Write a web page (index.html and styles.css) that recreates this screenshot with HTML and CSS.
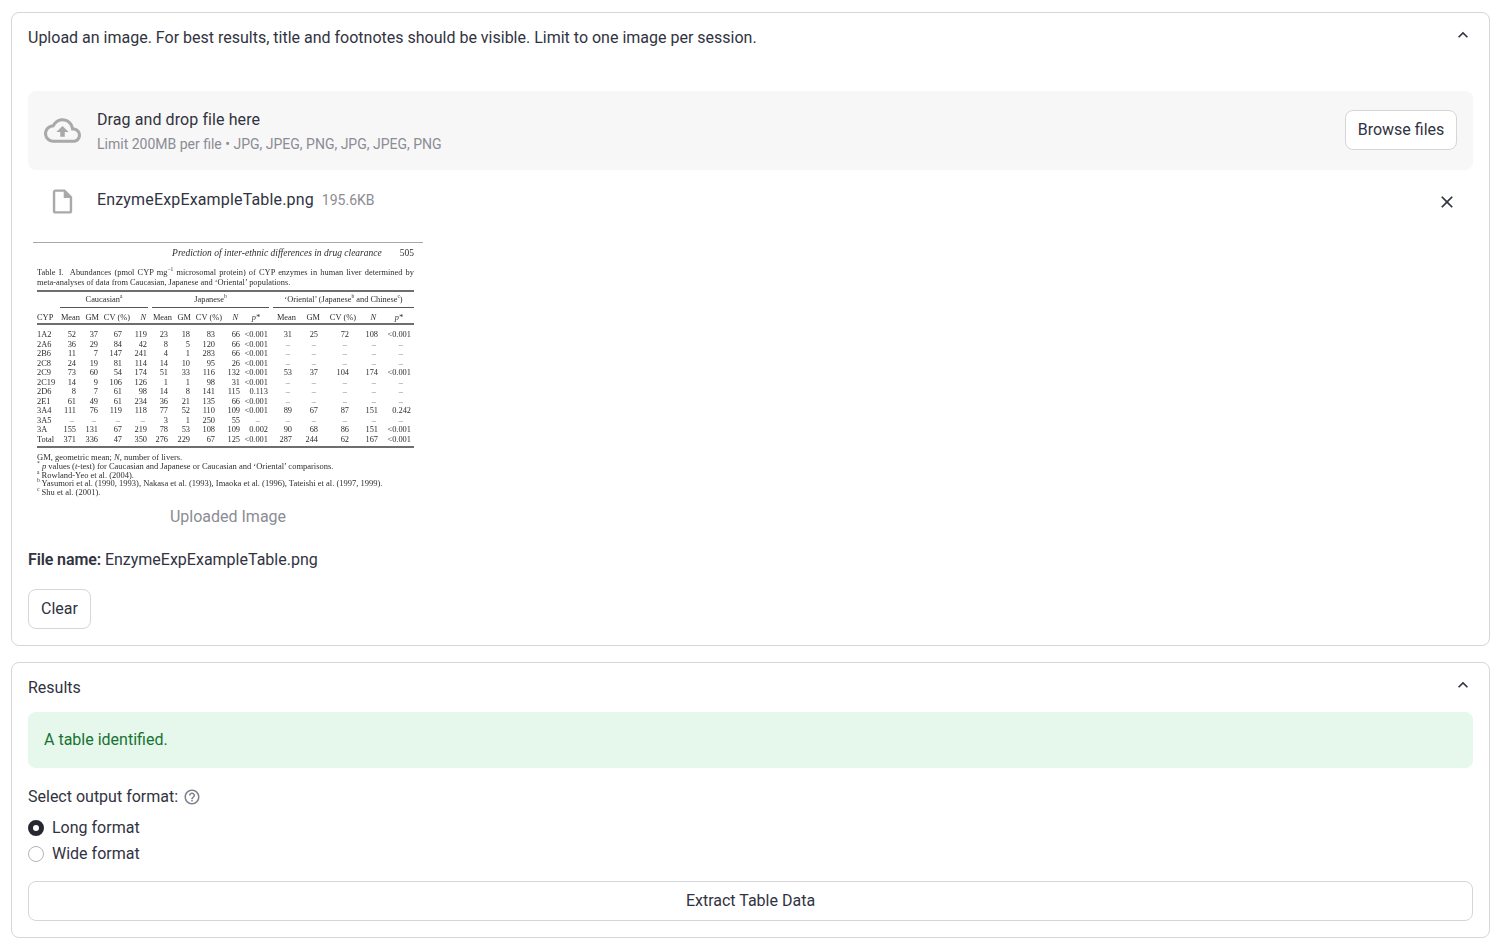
FILE: index.html
```html
<!DOCTYPE html>
<html lang="en">
<head>
<meta charset="utf-8">
<title>Upload an image</title>
<link rel="stylesheet" href="styles.css">
</head>
<body>
<main class="page">
  <section class="card">
    <div class="card-head">
      <span>Upload an image. For best results, title and footnotes should be visible. Limit to one image per session.</span>
      <svg class="chev" viewBox="0 0 24 24"><path d="M12 8l-6 6 1.41 1.41L12 10.83l4.59 4.58L18 14z"/></svg>
    </div>
    <div class="card-body">
      <div class="dropzone">
        <svg class="cloud" viewBox="0 0 24 24"><path d="M19.35 10.04C18.67 6.59 15.64 4 12 4 9.11 4 6.6 5.64 5.35 8.04 2.34 8.36 0 10.91 0 14c0 3.31 2.69 6 6 6h13c2.76 0 5-2.24 5-5 0-2.64-2.05-4.78-4.65-4.96zM19 18H6c-2.21 0-4-1.79-4-4 0-2.05 1.53-3.76 3.56-3.97l1.07-.11.5-.95C8.08 7.14 9.94 6 12 6c2.62 0 4.88 1.86 5.39 4.43l.3 1.5 1.53.11c1.56.1 2.78 1.41 2.78 2.96 0 1.65-1.35 3-3 3zM8 13h2.55v3h2.9v-3H16l-4-4z"/></svg>
        <div class="drop-text">
          <div class="drop-title">Drag and drop file here</div>
          <div class="drop-note">Limit 200MB per file • JPG, JPEG, PNG, JPG, JPEG, PNG</div>
        </div>
        <button class="btn browse">Browse files</button>
      </div>

      <div class="file-row">
        <div class="file-icon"><svg viewBox="0 0 24 24"><path d="M14 2H6c-1.1 0-1.99.9-1.99 2L4 20c0 1.1.89 2 1.99 2H18c1.1 0 2-.9 2-2V8l-6-6zM6 20V4h7v5h5v11H6z"/></svg></div>
        <span class="file-name">EnzymeExpExampleTable.png</span>
        <span class="file-size">195.6KB</span>
        <svg class="close" viewBox="0 0 24 24"><path d="M19 6.41L17.59 5 12 10.59 6.41 5 5 6.41 10.59 12 5 17.59 6.41 19 12 13.41 17.59 19 19 17.59 13.41 12z"/></svg>
      </div>

      <figure class="figure">
        <div class="scan">
          <div class="top-rule"></div>
          <div class="inner">
            <div class="running"><i>Prediction of inter-ethnic differences in drug clearance</i><span>505</span></div>
            <div class="caption-first">Table I. &nbsp;Abundances (pmol CYP mg<sup>−1</sup> microsomal protein) of CYP enzymes in human liver determined by</div>
            <div class="caption-second">meta-analyses of data from Caucasian, Japanese and ‘Oriental’ populations.</div>
            <div class="thick r1"></div>
            <div class="groups">
              <div class="group"><span>Caucasian<sup>a</sup></span></div>
              <div class="group"><span>Japanese<sup>b</sup></span></div>
              <div class="group"><span>‘Oriental’ (Japanese<sup>b</sup> and Chinese<sup>c</sup>)</span></div>
            </div>
            <div class="heads">
              <span class="l">CYP</span><span>Mean</span><span>GM</span><span>CV (%)</span><i>N</i><span>Mean</span><span>GM</span><span>CV (%)</span><i>N</i><i>p*</i><span>Mean</span><span>GM</span><span>CV (%)</span><i>N</i><i>p*</i>
            </div>
            <div class="thick r2"></div>
            <div class="rows">
              <div class="row"><span class="l">1A2</span><span>52</span><span>37</span><span>67</span><span>119</span><span>23</span><span>18</span><span>83</span><span>66</span><span>&lt;0.001</span><span>31</span><span>25</span><span>72</span><span>108</span><span>&lt;0.001</span></div>
              <div class="row"><span class="l">2A6</span><span>36</span><span>29</span><span>84</span><span>42</span><span>8</span><span>5</span><span>120</span><span>66</span><span>&lt;0.001</span><span class="d">–</span><span class="d">–</span><span class="d">–</span><span class="d">–</span><span class="dl">–</span></div>
              <div class="row"><span class="l">2B6</span><span>11</span><span>7</span><span>147</span><span>241</span><span>4</span><span>1</span><span>283</span><span>66</span><span>&lt;0.001</span><span class="d">–</span><span class="d">–</span><span class="d">–</span><span class="d">–</span><span class="dl">–</span></div>
              <div class="row"><span class="l">2C8</span><span>24</span><span>19</span><span>81</span><span>114</span><span>14</span><span>10</span><span>95</span><span>26</span><span>&lt;0.001</span><span class="d">–</span><span class="d">–</span><span class="d">–</span><span class="d">–</span><span class="dl">–</span></div>
              <div class="row"><span class="l">2C9</span><span>73</span><span>60</span><span>54</span><span>174</span><span>51</span><span>33</span><span>116</span><span>132</span><span>&lt;0.001</span><span>53</span><span>37</span><span>104</span><span>174</span><span>&lt;0.001</span></div>
              <div class="row"><span class="l">2C19</span><span>14</span><span>9</span><span>106</span><span>126</span><span>1</span><span>1</span><span>98</span><span>31</span><span>&lt;0.001</span><span class="d">–</span><span class="d">–</span><span class="d">–</span><span class="d">–</span><span class="dl">–</span></div>
              <div class="row"><span class="l">2D6</span><span>8</span><span>7</span><span>61</span><span>98</span><span>14</span><span>8</span><span>141</span><span>115</span><span>0.113</span><span class="d">–</span><span class="d">–</span><span class="d">–</span><span class="d">–</span><span class="dl">–</span></div>
              <div class="row"><span class="l">2E1</span><span>61</span><span>49</span><span>61</span><span>234</span><span>36</span><span>21</span><span>135</span><span>66</span><span>&lt;0.001</span><span class="d">–</span><span class="d">–</span><span class="d">–</span><span class="d">–</span><span class="dl">–</span></div>
              <div class="row"><span class="l">3A4</span><span>111</span><span>76</span><span>119</span><span>118</span><span>77</span><span>52</span><span>110</span><span>109</span><span>&lt;0.001</span><span>89</span><span>67</span><span>87</span><span>151</span><span>0.242</span></div>
              <div class="row"><span class="l">3A5</span><span class="d">–</span><span class="d">–</span><span class="d">–</span><span class="d">–</span><span>3</span><span>1</span><span>250</span><span>55</span><span class="dl">–</span><span class="d">–</span><span class="d">–</span><span class="d">–</span><span class="d">–</span><span class="dl">–</span></div>
              <div class="row"><span class="l">3A</span><span>155</span><span>131</span><span>67</span><span>219</span><span>78</span><span>53</span><span>108</span><span>109</span><span>0.002</span><span>90</span><span>68</span><span>86</span><span>151</span><span>&lt;0.001</span></div>
              <div class="row"><span class="l">Total</span><span>371</span><span>336</span><span>47</span><span>350</span><span>276</span><span>229</span><span>67</span><span>125</span><span>&lt;0.001</span><span>287</span><span>244</span><span>62</span><span>167</span><span>&lt;0.001</span></div>
            </div>
            <div class="thick r3"></div>
            <div class="notes">
              <div>GM, geometric mean; <i>N</i>, number of livers.</div>
              <div><sup>*</sup> <i>p</i> values (<i>t</i>-test) for Caucasian and Japanese or Caucasian and ‘Oriental’ comparisons.</div>
              <div><sup>a</sup> Rowland-Yeo et al. (2004).</div>
              <div><sup>b</sup> Yasumori et al. (1990, 1993), Nakasa et al. (1993), Imaoka et al. (1996), Tateishi et al. (1997, 1999).</div>
              <div><sup>c</sup> Shu et al. (2001).</div>
            </div>
          </div>
        </div>
        <figcaption class="fig-caption">Uploaded Image</figcaption>
      </figure>

      <p class="file-line"><strong>File name:</strong> EnzymeExpExampleTable.png</p>
      <button class="btn clear">Clear</button>
    </div>
  </section>

  <section class="card">
    <div class="card-head results-head">
      <span>Results</span>
      <svg class="chev" viewBox="0 0 24 24"><path d="M12 8l-6 6 1.41 1.41L12 10.83l4.59 4.58L18 14z"/></svg>
    </div>
    <div class="card-body">
      <div class="alert">A table identified.</div>
      <div class="field-label">
        <span>Select output format:</span>
        <svg class="help" viewBox="0 0 24 24"><path d="M11 18h2v-2h-2v2zm1-16C6.48 2 2 6.48 2 12s4.48 10 10 10 10-4.48 10-10S17.52 2 12 2zm0 18c-4.41 0-8-3.59-8-8s3.59-8 8-8 8 3.59 8 8-3.59 8-8 8zm0-14c-2.21 0-4 1.79-4 4h2c0-1.1.9-2 2-2s2 .9 2 2c0 2-3 1.75-3 5h2c0-2.25 3-2.5 3-5 0-2.21-1.79-4-4-4z"/></svg>
      </div>
      <div class="radio-row"><span class="radio on"></span><span>Long format</span></div>
      <div class="radio-row"><span class="radio"></span><span>Wide format</span></div>
      <button class="btn wide">Extract Table Data</button>
    </div>
  </section>
</main>
</body>
</html>
```
FILE: styles.css
```css
* { box-sizing: border-box; }
html, body { margin: 0; padding: 0; background: #fff; }
body {
  font-family: Roboto, "Liberation Sans", sans-serif;
  font-size: 16px;
  line-height: 24px;
  color: #31333f;
  height: 950px;
  overflow: hidden;
}
.page {
  padding: 12px 14px 0 11px;
  display: flex;
  flex-direction: column;
  gap: 16px;
}
.card {
  border: 1px solid #d6d6d8;
  border-radius: 8px;
}
.card-head {
  height: 48px;
  padding: 13px 16px 11px;
  display: flex;
  justify-content: space-between;
  position: relative;
}
.results-head { height: 49px; }
.chev {
  width: 20px;
  height: 20px;
  fill: #31333f;
  margin: -1px 0 0 0;
}
.card-body {
  padding: 0 16px 16px;
  display: flex;
  flex-direction: column;
}

.dropzone {
  margin-top: 30px;
  height: 79px;
  background: #f7f7f7;
  border-radius: 8px;
  display: flex;
  align-items: center;
  padding: 0 16px;
}
.cloud {
  width: 37px;
  height: 37px;
  fill: #a9a9ab;
  flex: none;
}
.drop-text {
  margin: 0 0 2px 16px;
  flex: 1;
}
.drop-title { line-height: 24px; margin-top: 2px; letter-spacing: .09px; }
.drop-note {
  font-size: 14px;
  line-height: 20px;
  color: #8b8c94;
  margin-top: 2px;
}
.btn {
  font: inherit;
  color: inherit;
  background: #fff;
  border: 1px solid #d6d6d8;
  border-radius: 8px;
  height: 40px;
  padding: 0 12px;
}
.browse { width: 112px; padding: 0; margin-bottom: 1px; }
.clear { align-self: flex-start; margin-top: 17px; }
.wide { margin-top: 14px; width: 100%; }

.file-row {
  height: 68px;
  padding-top: 17px;
  display: flex;
  align-items: flex-start;
}
.file-icon { width: 69px; height: 29px; display: flex; justify-content: center; flex: none; }
.file-icon svg { width: 29px; height: 29px; fill: #a9a9ab; }
.file-name { margin-top: 1px; letter-spacing: .16px; }
.file-size {
  font-size: 14px;
  color: #8b8c94;
  margin-left: 8px;
  line-height: 26px;
}
.close {
  width: 20px;
  height: 20px;
  fill: #31333f;
  margin: 5px 16px 0 auto;
}

.figure { margin: 0; width: 400px; }
.scan {
  width: 400px;
  height: 262px;
  background: #fff;
  padding-top: 4px;
  font-family: "Liberation Serif", "Times New Roman", serif;
  font-size: 8.4px;
  line-height: 10px;
  color: #2e2e2e;
  filter: blur(0.35px);
  overflow: hidden;
}
.scan sup { font-size: 5.5px; line-height: 0; }
.top-rule { height: 1px; margin: 0 5px; background: #a8a8a8; }
.inner { margin-left: 9px; width: 377px; }
.running {
  margin-top: 5px;
  height: 10px;
  display: flex;
  justify-content: flex-end;
  gap: 18px;
  font-size: 9.5px;
}
.caption-first {
  margin-top: 10px;
  text-align: justify;
  text-align-last: justify;
  white-space: nowrap;
}
.caption-second { height: 9px; }
.thick { height: 2px; background: #6e6e6e; }
.r1 { margin-top: 3px; }
.groups {
  margin-top: 2px;
  display: grid;
  grid-template-columns: 88px 117px 141px;
  column-gap: 4px;
  margin-left: 23px;
}
.group {
  text-align: center;
  height: 14px;
  padding-top: 1px;
  border-bottom: 1px solid #555;
}
.heads, .row {
  display: grid;
  text-align: right;
}
.heads {
  margin-top: 5px;
  height: 10px;
  grid-template-columns: 23px 20px 19px 31px 16px 26px 19px 31px 16px 22px 36px 24px 36px 20px 27px;
}
.heads span { white-space: nowrap; }
.r2 { margin-top: 0; }
.rows { margin-top: 5px; }
.row {
  height: 9.5px;
  line-height: 9.5px;
  white-space: nowrap;
  grid-template-columns: 23px 16px 22px 24px 25px 21px 22px 25px 25px 28px 24px 26px 31px 29px 33px;
}
.l { text-align: left; }
.d { padding-right: 2px; color: #777; }
.dl { padding-right: 8px; color: #777; }
.r3 { margin-top: 2px; }
.notes { margin-top: 5px; font-size: 8.5px; line-height: 8.8px; white-space: nowrap; }

.fig-caption {
  margin-top: 5px;
  text-align: center;
  color: #8b8c94;
  line-height: 24px;
}
.file-line { margin: 19px 0 0; }
.file-line strong { font-weight: 600; letter-spacing: -.12px; }

.alert {
  height: 56px;
  padding: 16px;
  background: #e6f7ec;
  border-radius: 8px;
  color: #177233;
}
.field-label {
  margin-top: 17px;
  height: 24px;
  display: flex;
  align-items: center;
  gap: 5px;
}
.help { width: 18px; height: 18px; fill: #7d7f8a; }
.radio-row {
  height: 26px;
  display: flex;
  align-items: center;
  gap: 8px;
}
.field-label + .radio-row { margin-top: 6px; }
.radio {
  width: 16px;
  height: 16px;
  border-radius: 50%;
  border: 1px solid #b4b5ba;
  background: #fff;
}
.radio.on { border: 5px solid #262730; }
```
